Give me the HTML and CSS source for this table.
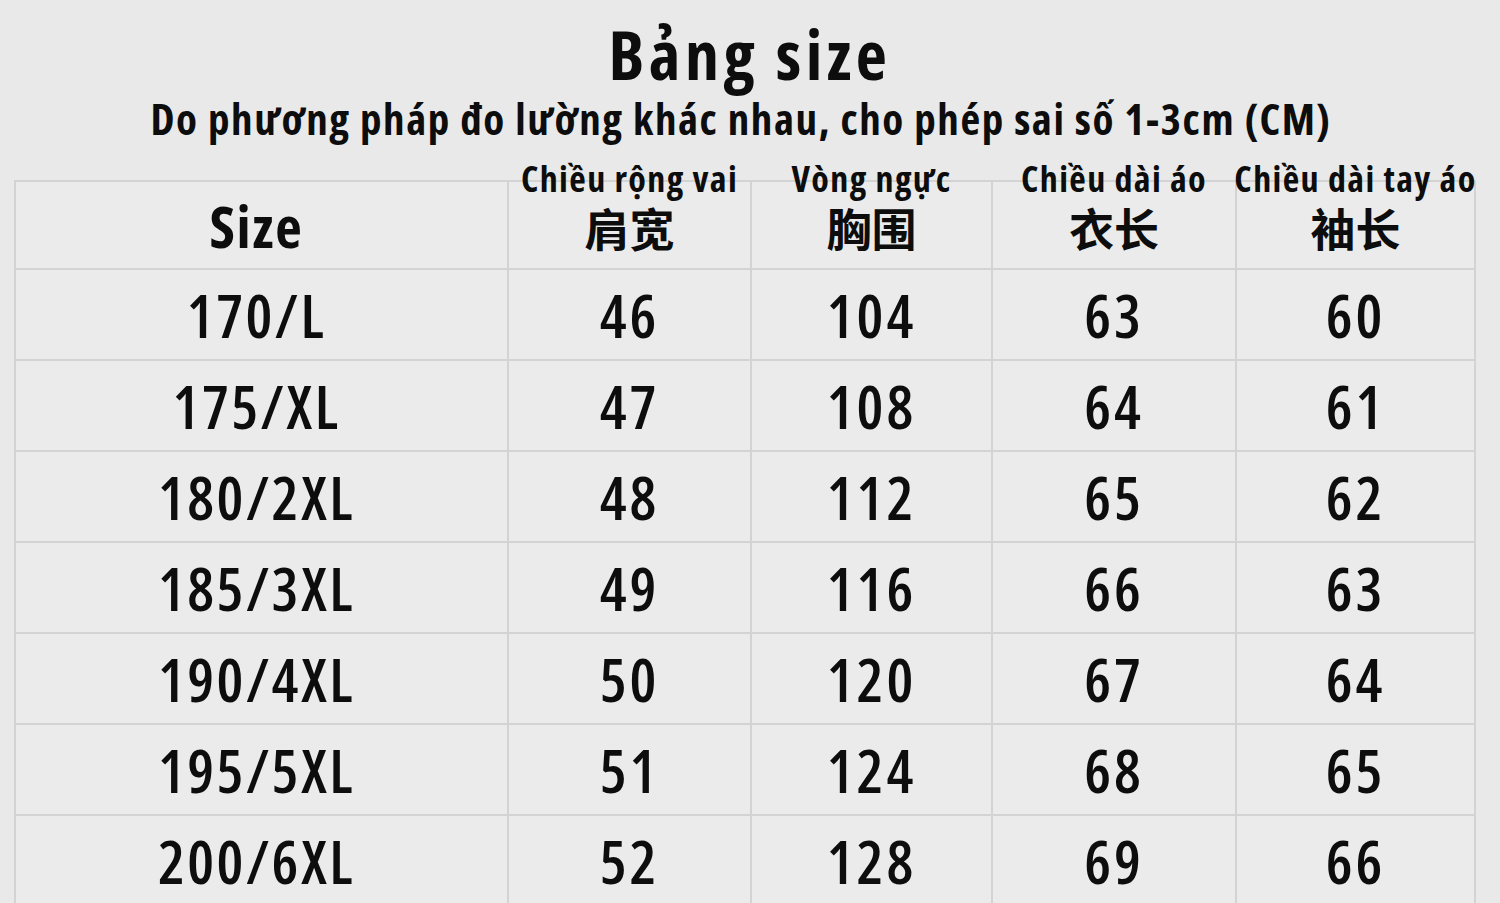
FILE: index.html
```html
<!DOCTYPE html>
<html lang="vi">
<head>
<meta charset="utf-8">
<title>Bảng size</title>
<link rel="stylesheet" href="styles.css">
</head>
<body>
<div class="page">
  <h1 class="title">Bảng size</h1>
  <p class="subtitle">Do phương pháp đo lường khác nhau, cho phép sai số 1-3cm (CM)</p>
  <div class="table">
    <div class="cell head first"><span class="size-label">Size</span></div>
    <div class="cell head"><div class="head-inner"><span class="vi">Chiều rộng vai</span><span class="zh">肩宽</span></div></div>
    <div class="cell head"><div class="head-inner"><span class="vi">Vòng ngực</span><span class="zh">胸围</span></div></div>
    <div class="cell head"><div class="head-inner"><span class="vi">Chiều dài áo</span><span class="zh">衣长</span></div></div>
    <div class="cell head last"><div class="head-inner"><span class="vi">Chiều dài tay áo</span><span class="zh">袖长</span></div></div>

    <div class="cell first">170/L</div><div class="cell">46</div><div class="cell">104</div><div class="cell">63</div><div class="cell last">60</div>
    <div class="cell first">175/XL</div><div class="cell">47</div><div class="cell">108</div><div class="cell">64</div><div class="cell last">61</div>
    <div class="cell first">180/2XL</div><div class="cell">48</div><div class="cell">112</div><div class="cell">65</div><div class="cell last">62</div>
    <div class="cell first">185/3XL</div><div class="cell">49</div><div class="cell">116</div><div class="cell">66</div><div class="cell last">63</div>
    <div class="cell first">190/4XL</div><div class="cell">50</div><div class="cell">120</div><div class="cell">67</div><div class="cell last">64</div>
    <div class="cell first">195/5XL</div><div class="cell">51</div><div class="cell">124</div><div class="cell">68</div><div class="cell last">65</div>
    <div class="cell first">200/6XL</div><div class="cell">52</div><div class="cell">128</div><div class="cell">69</div><div class="cell last">66</div>
  </div>
</div>
</body>
</html>
```

FILE: styles.css
```css
html, body {
  margin: 0;
  padding: 0;
  background: #e9e9e9;
  overflow: hidden;
}
body {
  font-family: "Open Sans", "Noto Sans", "Noto Sans CJK SC", sans-serif;
  font-stretch: condensed;
  color: #0d0d0d;
  width: 1500px;
  height: 903px;
}
.page {
  display: flex;
  flex-direction: column;
  align-items: stretch;
  padding-top: 16px;
}
.title {
  margin: 0;
  text-align: center;
  font-size: 68px;
  font-weight: 700;
  line-height: 76px;
  letter-spacing: 4.5px;
}
.subtitle {
  margin: 0;
  text-align: center;
  font-size: 43px;
  font-weight: 700;
  line-height: 54px;
  letter-spacing: 1.6px;
  padding-right: 18px;
}
.table {
  margin: 34px 0 0 14px;
  width: 1460px;
  display: grid;
  grid-template-columns: 493px 243px 241px 244px 239px;
  grid-template-rows: 88px repeat(7, 91px);
  border-top: 2px solid #d3d3d3;
  border-left: 2px solid #d3d3d3;
}
.cell {
  display: flex;
  align-items: center;
  justify-content: center;
  border-right: 2px solid #d3d3d3;
  border-bottom: 2px solid #d3d3d3;
  background: #ebebeb;
  font-size: 60px;
  font-weight: 600;
  letter-spacing: 3px;
}
.cell.first {
  padding-right: 10px;
  letter-spacing: 2.5px;
}
.head-inner {
  display: flex;
  flex-direction: column;
  align-items: center;
  gap: 7px;
  margin-top: -40px;
}
.size-label {
  font-size: 58px;
  font-weight: 700;
  letter-spacing: 1.8px;
}
.vi {
  font-size: 36px;
  font-weight: 700;
  line-height: 38px;
  letter-spacing: 1.4px;
  white-space: nowrap;
}
.zh {
  font-family: "Noto Sans CJK SC", sans-serif;
  font-size: 45px;
  font-weight: 700;
  line-height: 46px;
  letter-spacing: 0;
}
```
